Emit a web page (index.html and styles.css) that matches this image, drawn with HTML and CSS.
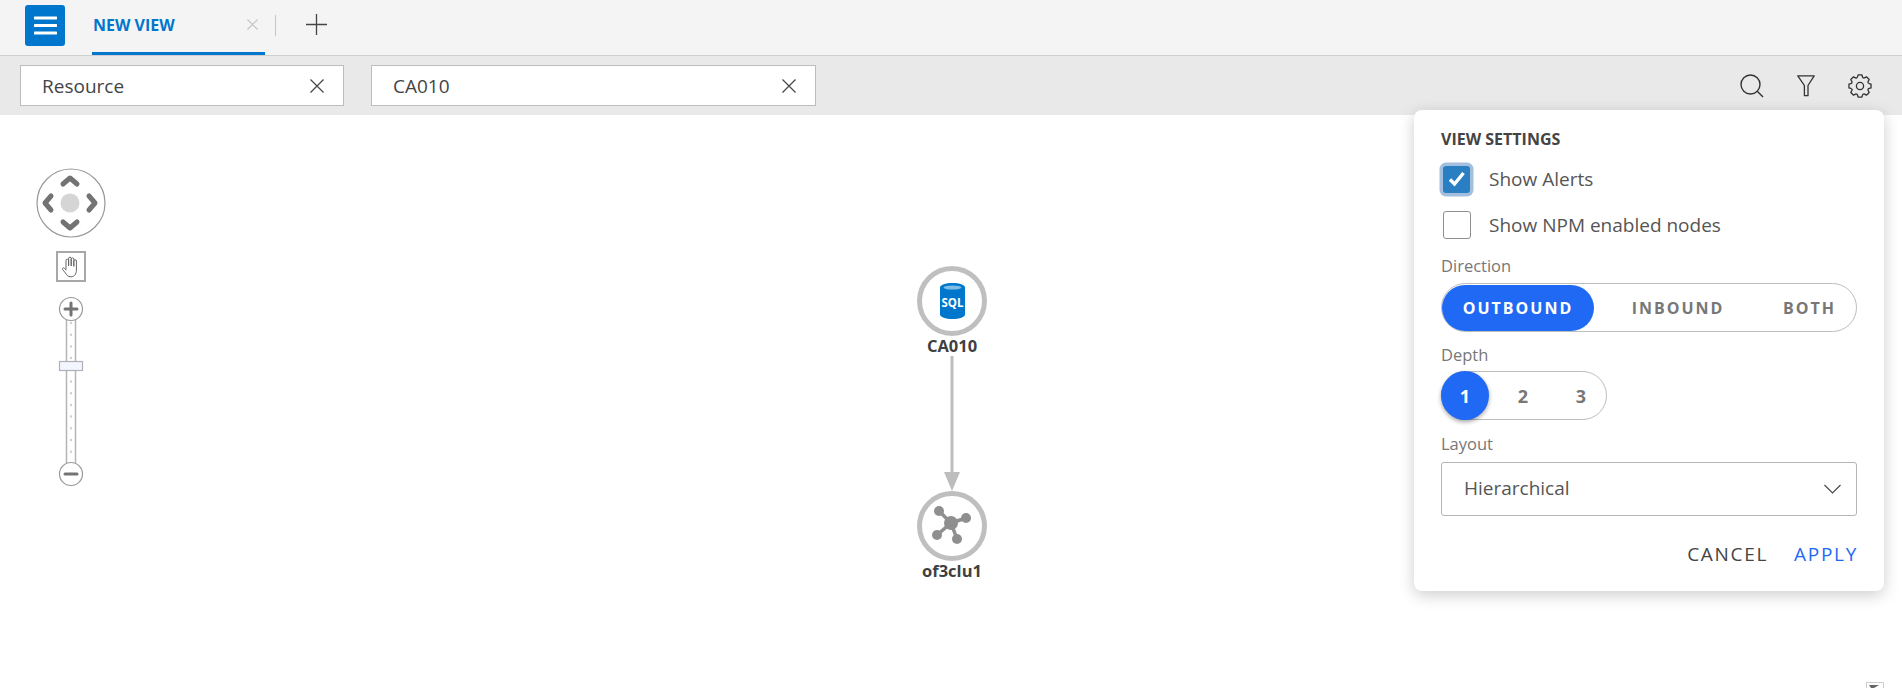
FILE: index.html
```html
<!DOCTYPE html>
<html lang="en">
<head>
<meta charset="utf-8">
<title>New View</title>
<link rel="stylesheet" href="styles.css">
</head>
<body>
<header class="tabbar">
  <button class="menu-btn" aria-label="Menu">
    <svg width="23" height="19" viewBox="0 0 23 19"><path d="M1 2h21M1 9.500h21M1 17h21" stroke="#fff" stroke-width="3" stroke-linecap="round"/></svg>
  </button>
  <div class="tab">
    <span class="tab-title">NEW VIEW</span>
    <svg class="tab-close" width="11" height="11" viewBox="0 0 11 11"><path d="M.5.5l10 10M10.5.5l-10 10" stroke="#c4c4c4" stroke-width="1.200"/></svg>
  </div>
  <span class="tab-divider"></span>
  <svg class="tab-add" width="21" height="21" viewBox="0 0 21 21"><path d="M0 10.500h21M10.500 0v21" stroke="#444" stroke-width="1.300"/></svg>
</header>

<section class="filterbar">
  <div class="chip chip-a"><span>Resource</span>
    <svg width="14" height="14" viewBox="0 0 14 14"><path d="M.5.5l13 13M13.500.5l-13 13" stroke="#444" stroke-width="1.200"/></svg>
  </div>
  <div class="chip chip-b"><span>CA010</span>
    <svg width="14" height="14" viewBox="0 0 14 14"><path d="M.5.5l13 13M13.500.5l-13 13" stroke="#444" stroke-width="1.200"/></svg>
  </div>
  <div class="tools">
    <svg width="24" height="24" viewBox="0 0 24 24" fill="none" stroke="#333" stroke-width="1.400"><circle cx="10.500" cy="10.500" r="9.500"/><path d="M17.500 17.500l5.500 5.500"/></svg>
    <svg width="18" height="22" viewBox="0 0 18 22" fill="none" stroke="#333" stroke-width="1.300"><path d="M.8.8h16.400L11 10.500v10.200H7.400V10.500z" stroke-linejoin="round"/></svg>
    <svg width="24" height="24" viewBox="0 0 24 24" fill="none" stroke="#333" stroke-width="1.300" stroke-linejoin="round">
      <defs><path id="gear-tooth" d="M9.280 3.630L10.060.97H13.940L14.720 3.630A8.800 8.800 0 0 1 16 4.160"/></defs>
      <circle cx="12" cy="12" r="3.600"/>
      <use href="#gear-tooth"/>
      <use href="#gear-tooth" transform="rotate(45 12 12)"/>
      <use href="#gear-tooth" transform="rotate(90 12 12)"/>
      <use href="#gear-tooth" transform="rotate(135 12 12)"/>
      <use href="#gear-tooth" transform="rotate(180 12 12)"/>
      <use href="#gear-tooth" transform="rotate(225 12 12)"/>
      <use href="#gear-tooth" transform="rotate(270 12 12)"/>
      <use href="#gear-tooth" transform="rotate(315 12 12)"/>
    </svg>
  </div>
</section>

<main class="canvas">
  <div class="compass">
    <svg width="70" height="72" viewBox="0 0 70 72" fill="none">
      <circle cx="35" cy="36" r="34" stroke="#999" stroke-width="1.200"/>
      <circle cx="34" cy="36" r="9.500" fill="#d5d5d5"/>
      <path d="M27 17l7-6 7 6M27 55l7 6 7-6M15 29l-6 7 6 7M53 29l6 7-6 7" stroke="#737373" stroke-width="5" stroke-linecap="round" stroke-linejoin="round"/>
    </svg>
  </div>
  <div class="hand">
    <svg width="20" height="22" viewBox="0 0 20 22" fill="none" stroke="#666" stroke-width="1" stroke-linejoin="round" stroke-linecap="round"><path d="M5 13V4.500a1.300 1.300 0 0 1 2.600 0V9.500M7.600 9.500V2.500a1.300 1.300 0 0 1 2.600 0V9.500M10.200 9.500V3.200a1.300 1.300 0 0 1 2.600 0V10M12.800 10V5a1.300 1.300 0 0 1 2.600 0v9c0 4-2 6.800-5.400 6.800-3 0-4.300-1.600-5.500-3.800L1.500 13.500c-.6-1.200 1-2.200 2-1.200L5 14"/></svg>
  </div>
  <div class="zoom-rail">
    <svg width="26" height="192" viewBox="0 0 26 192" fill="none">
      <rect x="8.500" y="14" width="9" height="160" fill="#fff" stroke="#b5b5b5" stroke-width="1.500"/>
      <path d="M13 27v140" stroke="#d0d0d0" stroke-width="2.500" stroke-linecap="round" stroke-dasharray="0 11.700"/>
      <circle cx="13" cy="13" r="11.500" fill="#fff" stroke="#999" stroke-width="1.200"/>
      <path d="M7 13h12M13 7v12" stroke="#737373" stroke-width="3" stroke-linecap="round"/>
      <rect x="1.500" y="65.500" width="23" height="9" fill="#f3f6ff" stroke="#b0b0b8" stroke-width="1.200"/>
      <circle cx="13" cy="178" r="11.500" fill="#fff" stroke="#999" stroke-width="1.200"/>
      <path d="M7 178h12" stroke="#737373" stroke-width="3" stroke-linecap="round"/>
    </svg>
  </div>

  <svg class="edge" width="20" height="136" viewBox="0 0 20 136">
    <path d="M10 0v120" stroke="#bdbdbd" stroke-width="3"/>
    <path d="M2 116h16l-8 19z" fill="#bdbdbd"/>
  </svg>

  <div class="node node-a">
    <div class="node-ring">
      <svg width="25" height="36" viewBox="0 0 25 36">
        <path d="M0 4.500C0 2 5.500 0 12.500 0S25 2 25 4.500v27c0 2.500-5.500 4.500-12.500 4.500S0 34 0 31.500z" fill="#0077cc"/>
        <ellipse cx="12.500" cy="4.500" rx="9" ry="2" fill="#7fbde6"/>
        <text x="12.500" y="23.500" class="sql">SQL</text>
      </svg>
    </div>
    <span class="node-label">CA010</span>
  </div>

  <div class="node node-b">
    <div class="node-ring">
      <svg width="40" height="40" viewBox="0 0 40 40" fill="#8f8f8f" stroke="none">
        <path d="M7 5L19 17M34 12L19 17M5 29L19 17M25 33L19 17" stroke="#8f8f8f" stroke-width="3.500"/>
        <circle cx="7" cy="5" r="5"/><circle cx="34" cy="12" r="5"/><circle cx="5" cy="29" r="5"/><circle cx="25" cy="33" r="5"/><circle cx="19" cy="17" r="7"/>
      </svg>
    </div>
    <span class="node-label">of3clu1</span>
  </div>

  <aside class="panel">
    <h2 class="panel-title">VIEW SETTINGS</h2>
    <label class="check-row check-on">
      <span class="box box-on">
        <svg width="18" height="16" viewBox="0 0 18 16"><path d="M2 8.500l4.500 4.500 9-11" fill="none" stroke="#fff" stroke-width="3.400"/></svg>
      </span>
      <span>Show Alerts</span>
    </label>
    <label class="check-row check-off">
      <span class="box"></span>
      <span>Show NPM enabled nodes</span>
    </label>

    <div class="field-label label-direction">Direction</div>
    <div class="segment segment-wide">
      <span class="seg seg-active seg-out">OUTBOUND</span>
      <span class="seg seg-in">INBOUND</span>
      <span class="seg seg-both">BOTH</span>
    </div>

    <div class="field-label label-depth">Depth</div>
    <div class="segment segment-depth">
      <span class="seg num num-active">1</span>
      <span class="seg num">2</span>
      <span class="seg num">3</span>
    </div>

    <div class="field-label label-layout">Layout</div>
    <div class="select">
      <span>Hierarchical</span>
      <svg width="17" height="10" viewBox="0 0 17 10"><path d="M.5 1l8 8 8-8" fill="none" stroke="#444" stroke-width="1.100"/></svg>
    </div>

    <div class="actions">
      <span class="act-cancel">CANCEL</span>
      <span class="act-apply">APPLY</span>
    </div>
  </aside>

  <div class="corner-mark">
    <svg width="18" height="6" viewBox="0 0 18 6"><path d="M.5 6V.5h17V6" fill="none" stroke="#ccc"/><path d="M3 3h10L8 6H5z" fill="#666"/></svg>
  </div>
</main>
</body>
</html>
```

FILE: styles.css
```css
* { box-sizing: border-box; }

html, body {
  margin: 0;
  height: 688px;
  overflow: hidden;
  background: #fff;
  font-family: "Open Sans", "Noto Sans", sans-serif;
  color: #444;
}

.tabbar {
  height: 56px;
  background: #f4f4f4;
  border-bottom: 1px solid #cfcfcf;
  display: flex;
  align-items: flex-start;
  padding-left: 25px;
}

.menu-btn {
  width: 40px;
  height: 41px;
  margin-top: 5px;
  padding: 0;
  border: 0;
  border-radius: 3px;
  background: #0077cc;
  display: flex;
  align-items: center;
  justify-content: center;
}

.tab {
  width: 173px;
  height: 55px;
  margin-left: 27px;
  padding: 0 7px 0 1px;
  border-bottom: 3px solid #0077cc;
  display: flex;
  align-items: center;
  justify-content: space-between;
}

.tab-title {
  font-size: 16px;
  font-weight: 700;
  color: #0077cc;
  position: relative;
  top: -1px;
}

.tab-close { position: relative; top: -2px; }

.tab-divider {
  width: 1px;
  height: 21px;
  margin: 15px 0 0 10px;
  background: #c4c4c4;
}

.tab-add { margin: 14px 0 0 30px; }

.filterbar {
  height: 59px;
  background: #e9e9e9;
  display: flex;
  align-items: center;
  padding-left: 20px;
}

.chip {
  height: 41px;
  background: #fff;
  border: 1px solid #bdbdbd;
  display: flex;
  align-items: center;
  justify-content: space-between;
  font-size: 19px;
  color: #444;
  padding: 0 19px 0 21px;
}

.chip-a { width: 324px; }
.chip-b { width: 445px; margin-left: 27px; }

.tools {
  margin-left: auto;
  padding-right: 30px;
  display: flex;
  align-items: center;
  gap: 33px;
}

.canvas {
  position: relative;
  height: 573px;
}

.compass { position: absolute; left: 36px; top: 52px; }

.hand {
  position: absolute;
  left: 56px;
  top: 136px;
  width: 30px;
  height: 31px;
  border: 2px solid #a8a8a8;
  display: flex;
  align-items: center;
  justify-content: center;
}

.zoom-rail { position: absolute; left: 58px; top: 181px; }

.edge { position: absolute; left: 942px; top: 241px; }

.node {
  position: absolute;
  width: 120px;
  display: flex;
  flex-direction: column;
  align-items: center;
}
.node-a { left: 892px; top: 151px; }
.node-b { left: 892px; top: 376px; }

.node-ring {
  width: 70px;
  height: 70px;
  border: 5px solid #bfbfbf;
  border-radius: 50%;
  background: #fff;
  display: flex;
  align-items: center;
  justify-content: center;
}

.node-label {
  font-size: 16.500px;
  font-weight: 700;
  line-height: 22px;
  color: #3f3f3f;
  position: relative;
  top: -1px;
}

.sql {
  font-family: "Open Sans", sans-serif;
  font-size: 11.500px;
  font-weight: 700;
  fill: #fff;
  text-anchor: middle;
}

.panel {
  position: absolute;
  left: 1414px;
  top: -5px;
  width: 470px;
  height: 481px;
  padding: 19px 27px 0;
  background: #fff;
  border-radius: 8px;
  box-shadow: 0 4px 16px rgba(0, 0, 0, .2);
}

.panel-title {
  margin: 0;
  font-size: 16px;
  line-height: 20px;
  font-weight: 700;
  color: #444;
}

.check-row {
  display: flex;
  align-items: center;
  gap: 18px;
  height: 32px;
  font-size: 19px;
  color: #555;
}
.check-on { margin-top: 14px; }
.check-off { margin-top: 14px; }

.box {
  width: 28px;
  height: 28px;
  margin-left: 2px;
  border: 1px solid #8f8f8f;
  border-radius: 3px;
  background: #fff;
  flex: none;
  display: flex;
  align-items: center;
  justify-content: center;
}

.box-on {
  width: 27px;
  height: 27px;
  margin: 0 1px 0 2px;
  background: #2a7fc2;
  border: 0;
  box-shadow: 0 0 0 3.500px #a3bfdd;
}

.field-label {
  font-size: 16.500px;
  line-height: 22px;
  color: #777;
}
.label-direction { margin-top: 14px; }
.label-depth { margin-top: 12px; }
.label-layout { margin-top: 13px; }

.segment {
  display: flex;
  align-items: center;
  border: 1px solid #bdbdbd;
  font-weight: 700;
  color: #777;
}

.segment-wide {
  width: 416px;
  height: 49px;
  margin-top: 6px;
  border-radius: 25px;
  font-size: 16px;
  letter-spacing: 2px;
}

.seg { display: flex; align-items: center; justify-content: center; }

.seg-active {
  background: #1f69f4;
  color: #fff;
  border-radius: 24px;
}
.seg-out { width: 152px; height: 46px; }
.seg-in { width: 168px; }
.seg-both { width: 94px; white-space: nowrap; padding-left: 21px; justify-content: flex-start; }

.segment-depth {
  width: 166px;
  height: 49px;
  margin-top: 5px;
  border-radius: 25px;
  font-size: 18px;
}

.num { height: 100%; flex: none; }
.num-active + .num { margin-left: 11px; width: 46px; }
.num-active + .num + .num { margin-left: 12px; width: 46px; }

.num-active {
  width: 48px;
  height: 49px;
  margin-left: -1px;
  background: #1f69f4;
  color: #fff;
  border-radius: 50%;
  box-shadow: 0 2px 4px rgba(0, 0, 0, .35);
}

.select {
  width: 416px;
  height: 54px;
  margin-top: 7px;
  padding: 0 15px 0 22px;
  border: 1px solid #b5b5b5;
  border-radius: 3px;
  display: flex;
  align-items: center;
  justify-content: space-between;
  font-size: 19px;
  color: #555;
}
.select span { position: relative; top: -1px; }

.actions {
  display: flex;
  justify-content: flex-end;
  gap: 26px;
  margin-top: 22px;
  font-size: 19px;
  line-height: 32px;
  letter-spacing: 1.700px;
}
.act-cancel { color: #444; }
.act-apply { color: #1f69f4; margin-right: -1px; }

.corner-mark { position: absolute; left: 1866px; top: 567px; line-height: 0; }
```
